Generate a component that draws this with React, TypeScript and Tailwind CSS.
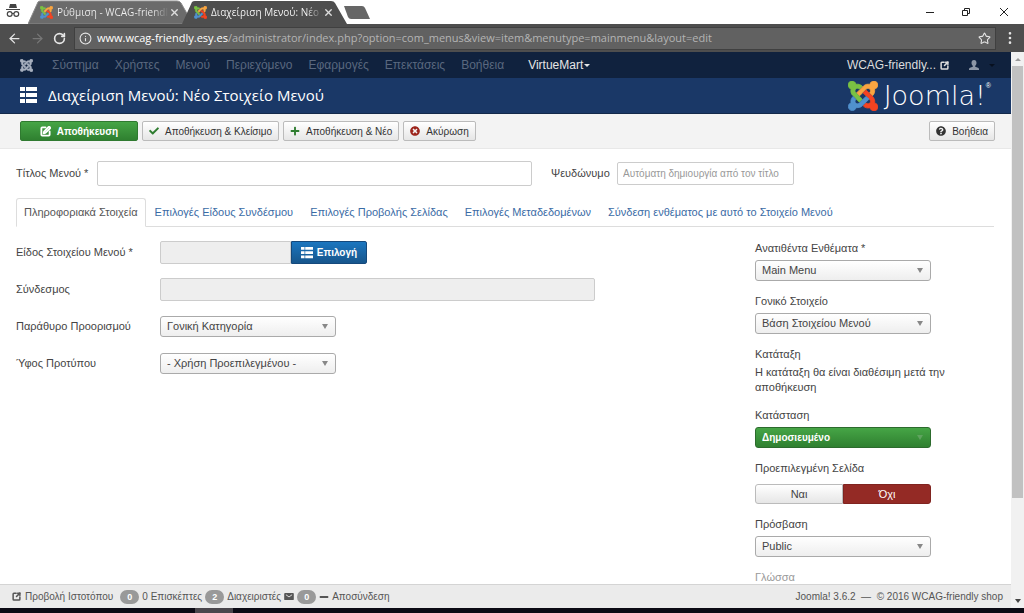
import type { ReactNode } from "react";
import { FaCheck, FaMinus, FaPlus, FaQuestionCircle, FaTimesCircle } from "react-icons/fa";
import {
  ArrowLeft,
  ArrowRight,
  Info,
  MoreVertical,
  RotateCw,
  SquareArrowOutUpRight,
  SquarePen,
  Star,
  X,
} from "lucide-react";

const JOOMLA_ARMS = [
  {
    fill: "#7ac143",
    d: "M13.5,37.7L12,36.3c-4.5-4.5-5.8-10.8-4.2-16.5c-4.5-1-7.8-5-7.8-9.8c0-5.5,4.5-10,10-10c5,0,9.1,3.6,9.9,8.4c5.4-1.3,11.3,0.2,15.5,4.4l0.6,0.6l-7.4,7.4l-0.6-0.6c-2.4-2.4-6.3-2.4-8.7,0c-2.4,2.4-2.4,6.3,0,8.7l1.4,1.4l7.4,7.4l7.8,7.8l-7.4,7.4l-7.8-7.8L13.5,37.7z",
  },
  {
    fill: "#f9a541",
    d: "M21.8,29.5l7.8-7.8l7.4-7.4l1.4-1.4C42.9,8.4,49.2,7,54.8,8.6C55.5,3.8,59.7,0,64.8,0c5.5,0,10,4.5,10,10c0,5.1-3.8,9.3-8.7,9.9c1.6,5.6,0.2,11.9-4.2,16.3l-0.6,0.6l-7.4-7.4l0.6-0.6c2.4-2.4,2.4-6.3,0-8.7c-2.4-2.4-6.3-2.4-8.7,0l-1.4,1.4L37,29l-7.8,7.8L21.8,29.5z",
  },
  {
    fill: "#f44321",
    d: "M55,66.8c-5.7,1.7-12.1,0.4-16.6-4.1l-0.5-0.5l7.4-7.4l0.5,0.5c2.4,2.4,6.3,2.4,8.7,0c2.4-2.4,2.4-6.3,0-8.7l-1.4-1.4L45.7,37.8L37.9,30l7.4-7.4l7.8,7.8l7.4,7.4l1.5,1.5c4.2,4.2,5.7,10.2,4.4,15.7c4.9,0.7,8.6,4.9,8.6,9.9c0,5.5-4.5,10-10,10C60,74.8,56,71.3,55,66.8z",
  },
  {
    fill: "#5091cd",
    d: "M52.8,45.1l-7.8,7.8l-7.4,7.4l-1.4,1.4c-4.3,4.3-10.3,5.7-15.7,4.4c-1,4.5-5,7.8-9.8,7.8c-5.5,0-10-4.5-10-10C0.5,59,3.3,56.1,7.7,55C6.3,49.5,7.8,43.5,12.1,39.2l0.6-0.6L20,46l-0.6,0.6c-2.4,2.4-2.4,6.3,0,8.7c2.4,2.4,6.3,2.4,8.7,0l1.4-1.4l7.4-7.4l7.8-7.8L52.8,45.1z",
  },
];

function JoomlaMark({ className, mono }: { className: string; mono?: string }) {
  const color = (fill: string) => mono ?? fill;
  return (
    <svg viewBox="0 0 75 75" className={className} aria-hidden>
      {JOOMLA_ARMS.map((arm) => (
        <path key={arm.fill} d={arm.d} fill={color(arm.fill)} stroke={color(arm.fill)} strokeWidth="2" />
      ))}
    </svg>
  );
}

function ListIcon({ className }: { className: string }) {
  return (
    <svg viewBox="0 0 17 17" className={className} fill="currentColor" aria-hidden>
      <path d="M0 0h5v4H0z M6 0h11v4H6z M0 6h5v4H0z M6 6h11v4H6z M0 12h5v4H0z M6 12h11v4H6z" />
    </svg>
  );
}

function BrowserTab({ title, active }: { title: string; active?: boolean }) {
  return (
    <div className={["relative h-6 w-[166px] flex-none", active ? "z-10 -ml-[12px]" : ""].join(" ")}>
      <svg
        viewBox="0 0 166 24"
        preserveAspectRatio="none"
        className="absolute inset-0 size-full"
        aria-hidden
      >
        <path
          d="M0 24 L10 2 Q11 1 13 1 H149 Q152 1 153 3 L165 24 Z"
          fill={active ? "#4e4e4e" : "#6b6b6b"}
          stroke="#8b8b8b"
          strokeWidth={active ? 0 : 1}
        />
      </svg>
      <div className="relative flex h-full items-center pl-[12px] pr-[14px] pt-px">
        <JoomlaMark className="size-[13px] flex-none" />
        <span
          className={[
            "ml-1 min-w-0 flex-1 whitespace-nowrap text-[10px] font-medium",
            "bg-linear-to-r from-85% to-transparent bg-clip-text text-transparent",
            active ? "from-white" : "from-[#eeeeee]",
          ].join(" ")}
        >
          {title}
        </span>
        <button type="button" aria-label="Close tab" className="text-[#dddddd]">
          <X className="size-[11px]" strokeWidth={3} />
        </button>
      </div>
    </div>
  );
}

function BrowserChrome() {
  return (
    <header className="flex-none font-['Open_Sans','Noto_Sans',sans-serif]">
      <div className="flex h-6 items-end bg-white">
        <svg viewBox="0 0 28 24" className="h-6 w-7 flex-none" aria-hidden>
          <path d="M9 8 L10 4 H16 L17 8 Z M6 9 H20 V10 H6 Z" fill="#444" />
          <g fill="none" stroke="#444" strokeWidth="1.2">
            <circle cx="9.700" cy="14" r="2.400" />
            <circle cx="16.300" cy="14" r="2.400" />
            <path d="M12 13.500 H14" />
          </g>
        </svg>
        <BrowserTab title="Ρύθμιση - WCAG-friendl" />
        <BrowserTab title="Διαχείριση Μενού: Νέο Σ" active />
        <svg viewBox="0 0 28 24" className="-ml-1 h-6 w-7 flex-none" aria-hidden>
          <path d="M0 6 H18 Q20 6 21 8 L26 19 H7 Q5 19 4 17 Z" fill="#666" />
        </svg>
        <div className="ml-auto flex h-full items-center">
          <button type="button" aria-label="Minimize" className="grid w-9 place-items-center">
            <svg viewBox="0 0 10 10" className="size-[10px]">
              <path d="M1 5.500 H9" stroke="#222" />
            </svg>
          </button>
          <button type="button" aria-label="Restore" className="grid w-9 place-items-center">
            <svg viewBox="0 0 10 10" className="size-[10px]" fill="none" stroke="#222">
              <path d="M1.500 3.500 H6.500 V8.500 H1.500 Z M3.500 3 V1.500 H8.500 V6.500 H7" />
            </svg>
          </button>
          <button type="button" aria-label="Close" className="grid w-10 place-items-center">
            <svg viewBox="0 0 10 10" className="size-[10px]">
              <path d="M1 1 L9 9 M9 1 L1 9" stroke="#222" />
            </svg>
          </button>
        </div>
      </div>
      <div className="flex h-7 items-center bg-[#4e4e4e] text-[#e6e6e6]">
        <button type="button" aria-label="Back" className="ml-[7px]">
          <ArrowLeft className="size-[15px]" />
        </button>
        <button type="button" aria-label="Forward" className="ml-2 text-[#777777]">
          <ArrowRight className="size-[15px]" />
        </button>
        <button type="button" aria-label="Reload" className="ml-2">
          <RotateCw className="size-[13px]" strokeWidth={3} />
        </button>
        <div className="ml-2 flex h-[23px] flex-1 items-center border border-[#404040] bg-[#616161] pl-1 pr-1">
          <Info className="size-[13px]" />
          <div className="ml-[5px] flex-1 whitespace-nowrap text-[11px] text-[#b4b4b4]">
            <span className="text-white">www.wcag-friendly.esy.es</span>
            /administrator/index.php?option=com_menus&amp;view=item&amp;menutype=mainmenu&amp;layout=edit
          </div>
          <button type="button" aria-label="Bookmark">
            <Star className="size-[13px]" strokeWidth={2} />
          </button>
        </div>
        <button type="button" aria-label="Browser menu" className="mx-[6px]">
          <MoreVertical className="size-[16px]" />
        </button>
      </div>
    </header>
  );
}

const NAV = ["Σύστημα", "Χρήστες", "Μενού", "Περιεχόμενο", "Εφαρμογές", "Επεκτάσεις", "Βοήθεια"];

function AdminNav() {
  return (
    <nav className="flex h-[26px] flex-none items-center bg-[#10223e] pl-5 pr-4 text-[12px] text-[#5a687f]">
      <JoomlaMark className="size-[13px] flex-none" mono="#a7b0be" />
      <div className="ml-[19px] flex gap-4 whitespace-nowrap">
        {NAV.map((item) => (
          <a key={item} href="#">
            {item}
          </a>
        ))}
      </div>
      <a href="#" className="ml-6 flex items-center gap-px text-[#e6e6e6]">
        VirtueMart
        <span className="border-x-[3px] border-t-[3px] border-x-transparent border-t-[#e6e6e6]" />
      </a>
      <a href="#" className="ml-auto flex items-center gap-1 text-[#dddddd]">
        WCAG-friendly...
        <SquareArrowOutUpRight className="size-[9px]" strokeWidth={4} />
      </a>
      <button type="button" aria-label="User menu" className="ml-5 flex items-center gap-2.5 text-[#8d97a6]">
        <svg viewBox="0 0 10 10" className="size-[10px]" fill="currentColor" aria-hidden>
          <path d="M5 0 C6.700 0 7.500 1.200 7.500 2.800 C7.500 4.100 7 5.200 6.200 5.800 V6.700 L9 7.800 Q10 8.200 10 9.200 V10 H0 V9.200 Q0 8.200 1 7.800 L3.800 6.700 V5.800 C3 5.200 2.500 4.100 2.500 2.800 C2.500 1.200 3.300 0 5 0 Z" />
        </svg>
        <span className="border-x-[3px] border-t-[3px] border-x-transparent border-t-[#07101f]" />
      </button>
    </nav>
  );
}

function TitleBar() {
  return (
    <div className="flex h-9 flex-none items-center border-b border-[#13294a] bg-[#1a3867] pl-5 pr-5 text-white">
      <ListIcon className="size-[17px] flex-none" />
      <h1 className="ml-[11px] whitespace-nowrap font-['Open_Sans','Noto_Sans',sans-serif] text-[15px]">
        Διαχείριση Μενού: Νέο Στοιχείο Μενού
      </h1>
      <div className="ml-auto flex items-center">
        <JoomlaMark className="size-[30px]" />
        <span className="ml-1.5 font-['DejaVu_Sans',sans-serif] text-[27px] font-extralight leading-8">
          Joomla!
        </span>
        <sup className="mb-3 text-[7px]">®</sup>
      </div>
    </div>
  );
}

function ToolButton({ icon, children, wide }: { icon: ReactNode; children: ReactNode; wide?: boolean }) {
  return (
    <button
      type="button"
      className={[
        "flex h-5 items-center justify-center gap-1.5 whitespace-nowrap rounded-[2px] border text-[10px]",
        wide
          ? "w-[118px] border-[#2f7a30] bg-linear-to-b from-[#46a546] to-[#2f8030] font-bold text-white"
          : "border-[#bbbbbb] bg-linear-to-b from-white to-[#e6e6e6] px-1.5 text-[#333333]",
      ].join(" ")}
    >
      {icon}
      {children}
    </button>
  );
}

function Toolbar() {
  return (
    <div className="flex h-[35px] flex-none items-center border-b border-[#e8e8e8] bg-[#f3f3f3] pl-5 pr-4">
      <div className="flex gap-1">
        <ToolButton wide icon={<SquarePen className="size-[11px]" strokeWidth={4} />}>
          Αποθήκευση
        </ToolButton>
        <ToolButton icon={<FaCheck className="size-[10px] text-[#2f7d30]" />}>
          Αποθήκευση &amp; Κλείσιμο
        </ToolButton>
        <ToolButton icon={<FaPlus className="size-[10px] text-[#2f7d30]" />}>
          Αποθήκευση &amp; Νέο
        </ToolButton>
        <ToolButton icon={<FaTimesCircle className="size-[10px] text-[#9d261d]" />}>
          Ακύρωση
        </ToolButton>
      </div>
      <div className="ml-auto">
        <ToolButton icon={<FaQuestionCircle className="size-[10px]" />}>Βοήθεια</ToolButton>
      </div>
    </div>
  );
}

function Select({ id, value, success }: { id: string; value: string; success?: boolean }) {
  return (
    <div className="relative w-[176px]">
      <select
        id={id}
        className={[
          "block h-[21px] w-full appearance-none rounded-[3px] border pl-1.5 pr-5 leading-[15px]",
          success
            ? "border-[#2c6b2d] bg-linear-to-b from-[#46a546] to-[#2f8030] text-[10px] font-bold text-white"
            : "border-[#aaaaaa] bg-linear-to-b from-white to-[#eeeeee] text-[#444444]",
        ].join(" ")}
      >
        <option>{value}</option>
      </select>
      <span
        className={[
          "pointer-events-none absolute right-2 top-2 border-x-[3px] border-t-[5px] border-x-transparent",
          success ? "border-t-[#5fa35f]" : "border-t-[#888888]",
        ].join(" ")}
      />
    </div>
  );
}

const TABS = [
  "Πληροφοριακά Στοιχεία",
  "Επιλογές Είδους Συνδέσμου",
  "Επιλογές Προβολής Σελίδας",
  "Επιλογές Μεταδεδομένων",
  "Σύνδεση ενθέματος με αυτό το Στοιχείο Μενού",
];

function Field({ id, label, children }: { id: string; label: string; children: ReactNode }) {
  return (
    <div className="flex h-[23px] items-center">
      <label htmlFor={id} className="w-36 flex-none">
        {label}
      </label>
      {children}
    </div>
  );
}

function Sidebar() {
  return (
    <aside className="flex w-[239px] flex-none flex-col gap-[13px]">
      <div className="flex flex-col gap-1">
        <label htmlFor="menutype">Ανατιθέντα Ενθέματα *</label>
        <Select id="menutype" value="Main Menu" />
      </div>
      <div className="flex flex-col gap-1">
        <label htmlFor="parent">Γονικό Στοιχείο</label>
        <Select id="parent" value="Βάση Στοιχείου Μενού" />
      </div>
      <div className="flex flex-col gap-[3px]">
        <span>Κατάταξη</span>
        <p className="w-[192px]">Η κατάταξη θα είναι διαθέσιμη μετά την αποθήκευση</p>
      </div>
      <div className="flex flex-col gap-1">
        <label htmlFor="state">Κατάσταση</label>
        <Select id="state" value="Δημοσιευμένο" success />
      </div>
      <fieldset>
        <legend>Προεπιλεγμένη Σελίδα</legend>
        <div className="mt-2 flex h-5 w-[176px]">
          <label className="flex flex-1 items-center justify-center rounded-l-[3px] border border-[#bbbbbb] bg-linear-to-b from-white to-[#e6e6e6]">
            <input type="radio" name="home" className="sr-only" />
            Ναι
          </label>
          <label className="flex flex-1 items-center justify-center rounded-r-[3px] border border-[#802420] bg-[#942a25] text-white">
            <input type="radio" name="home" defaultChecked className="sr-only" />
            Όχι
          </label>
        </div>
      </fieldset>
      <div className="flex flex-col gap-1">
        <label htmlFor="access">Πρόσβαση</label>
        <Select id="access" value="Public" />
      </div>
      <div className="flex flex-col gap-1">
        <label htmlFor="language" className="text-[#999999]">
          Γλώσσα
        </label>
        <Select id="language" value="Όλες" />
      </div>
    </aside>
  );
}

function MenuItemForm() {
  return (
    <main className="min-h-0 flex-1 overflow-hidden bg-white pl-4 pr-[17px] pt-3 text-[11px] leading-[15px] text-[#444444]">
      <div className="flex h-[25px] items-center">
        <label htmlFor="title" className="w-[81px] flex-none">
          Τίτλος Μενού *
        </label>
        <input id="title" className="h-[25px] w-[435px] rounded-[2px] border border-[#cccccc] px-1.5" />
        <label htmlFor="alias" className="ml-[19px] w-[66px] flex-none">
          Ψευδώνυμο
        </label>
        <input
          id="alias"
          placeholder="Αυτόματη δημιουργία από τον τίτλο"
          className="h-[23px] w-[177px] rounded-[2px] border border-[#cccccc] px-[5px] text-[10px] placeholder:text-[#999999]"
        />
      </div>

      <div role="tablist" className="mt-3 flex border-b border-[#dddddd]">
        {TABS.map((tab, i) => (
          <button
            key={tab}
            type="button"
            role="tab"
            aria-selected={i === 0}
            className={[
              "-mb-px mr-px h-[29px] whitespace-nowrap rounded-t-[3px] border px-[7px]",
              i === 0
                ? "border-[#dddddd] border-b-white bg-white text-[#555555]"
                : "border-transparent text-[#3a6ba5]",
            ].join(" ")}
          >
            {tab}
          </button>
        ))}
      </div>

      <div className="mt-3.5 flex justify-between">
        <div className="flex flex-col gap-3.5">
          <Field id="type" label="Είδος Στοιχείου Μενού *">
            <input id="type" readOnly className="h-[23px] w-[131px] rounded-l-[2px] border border-[#cccccc] bg-[#eeeeee]" />
            <button
              type="button"
              className="flex h-[23px] w-[76px] items-center justify-center gap-1 rounded-r-[2px] border border-[#15497c] bg-linear-to-b from-[#1b76c0] to-[#17568c] text-[10px] font-bold text-white"
            >
              <ListIcon className="size-[12px]" />
              Επιλογή
            </button>
          </Field>
          <Field id="link" label="Σύνδεσμος">
            <input id="link" readOnly className="h-[23px] w-[435px] rounded-[2px] border border-[#cccccc] bg-[#eeeeee]" />
          </Field>
          <Field id="target" label="Παράθυρο Προορισμού">
            <Select id="target" value="Γονική Κατηγορία" />
          </Field>
          <Field id="style" label="Ύφος Προτύπου">
            <Select id="style" value="- Χρήση Προεπιλεγμένου -" />
          </Field>
        </div>
        <Sidebar />
      </div>
    </main>
  );
}

function Badge({ children }: { children: ReactNode }) {
  return (
    <span className="rounded-full bg-[#999999] px-[7px] text-[9px] font-bold leading-[14px] text-white">
      {children}
    </span>
  );
}

function StatusBar() {
  return (
    <footer className="flex h-6 flex-none items-center border-t border-[#d4d4d4] bg-[#ebebeb] pl-3 pr-2 text-[10px] text-[#555555]">
      <div className="flex items-center gap-[3px] whitespace-nowrap">
        <a href="#" className="mr-1 flex items-center gap-1">
          <SquareArrowOutUpRight className="size-[9px]" strokeWidth={4} />
          Προβολή Ιστοτόπου
        </a>
        <Badge>0</Badge>
        <span>0 Επισκέπτες</span>
        <Badge>2</Badge>
        <span>Διαχειριστές</span>
        <svg viewBox="0 0 11 8" className="h-[7px] w-[10px]" aria-label="Messages">
          <rect width="11" height="8" rx="1" fill="#555" />
          <path d="M2 2 L5.500 4.500 L9 2" fill="none" stroke="#ebebeb" />
        </svg>
        <Badge>0</Badge>
        <a href="#" className="flex items-center gap-[3px]">
          <FaMinus className="size-[10px]" />
          Αποσύνδεση
        </a>
      </div>
      <div className="ml-auto whitespace-nowrap">Joomla! 3.6.2 &nbsp;—&nbsp; © 2016 WCAG-friendly shop</div>
    </footer>
  );
}

function Scrollbar() {
  return (
    <div className="flex w-[13px] flex-none flex-col items-center bg-[#f1f1f1]" aria-hidden>
      <div className="grid h-[14px] place-items-center">
        <span className="border-x-[3px] border-b-[3px] border-x-transparent border-b-[#999999]" />
      </div>
      <div className="w-[11px] basis-[432px] bg-[#c1c1c1]" />
      <div className="mt-auto grid h-[14px] place-items-center">
        <span className="border-x-[3px] border-t-[4px] border-x-transparent border-t-[#444444]" />
      </div>
    </div>
  );
}

export default function App() {
  return (
    <div className="flex h-screen flex-col overflow-hidden bg-white font-['Liberation_Sans',Arial,sans-serif]">
      <BrowserChrome />
      <div className="flex min-h-0 flex-1">
        <div className="flex min-w-0 flex-1 flex-col">
          <AdminNav />
          <TitleBar />
          <Toolbar />
          <MenuItemForm />
          <StatusBar />
        </div>
        <Scrollbar />
      </div>
      <div className="flex h-[5px] flex-none bg-[#0b0a14]">
        <div className="ml-[195px] w-[38px] bg-[#4a464c]" />
      </div>
    </div>
  );
}
